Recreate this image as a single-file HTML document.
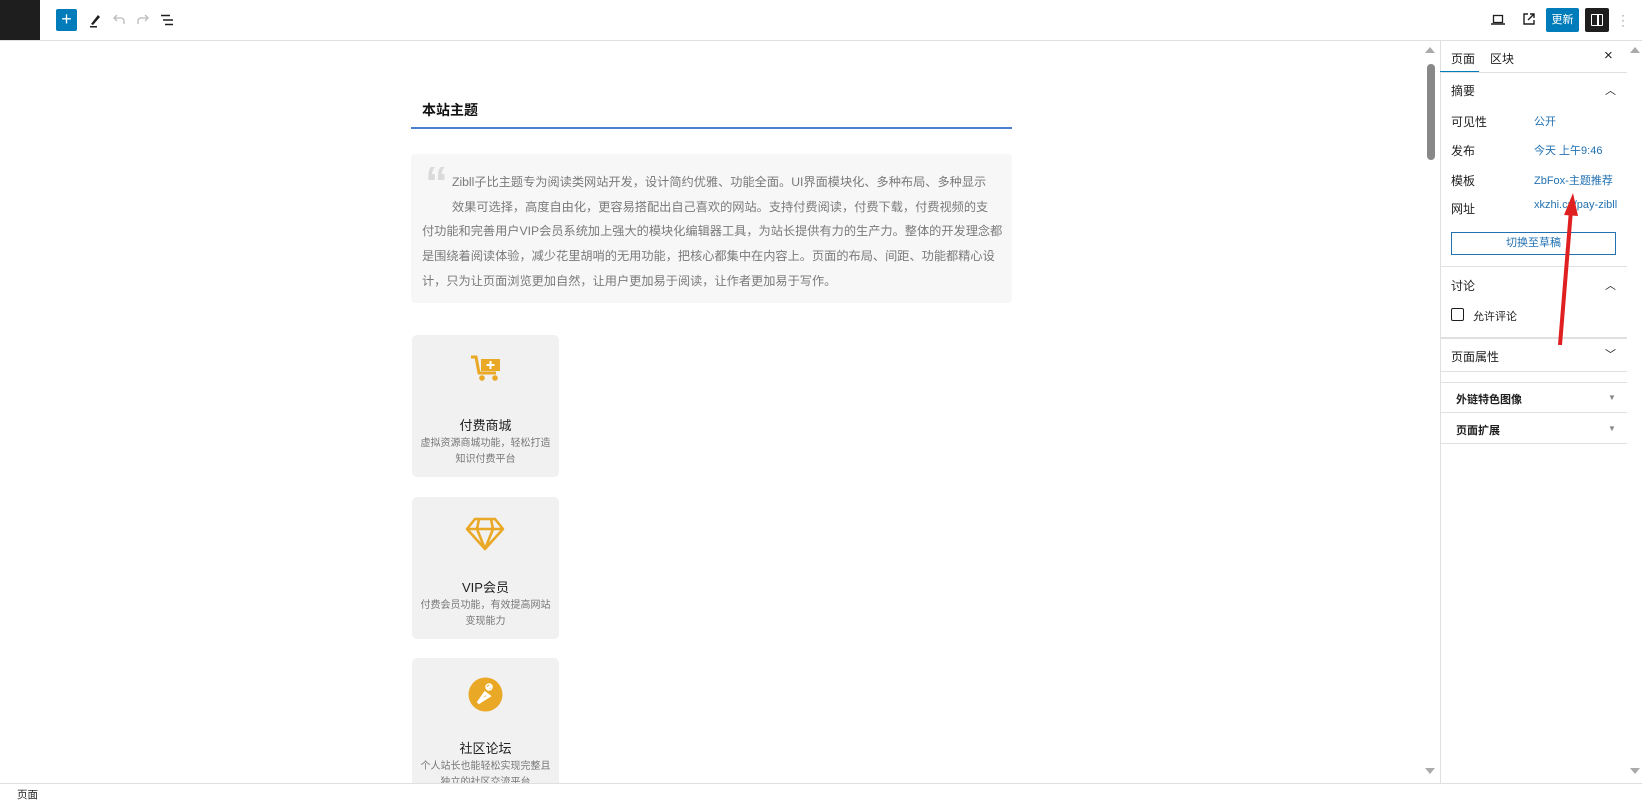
<!DOCTYPE html>
<html><head><meta charset="utf-8"><style>
*{margin:0;padding:0;box-sizing:border-box}
body{width:1642px;height:801px;overflow:hidden;background:#fff;font-family:"Liberation Sans","Noto Sans CJK SC",sans-serif;position:relative;color:#1e1e1e}
.a{position:absolute}
.t{font-size:12px}
.sb{font-size:12px;color:#1e1e1e}
.v{font-size:11px;color:#2271b1}
.card{position:absolute;left:412px;width:147px;height:142px;background:#f1f1f1;border-radius:5px;text-align:center}
.card h4{position:absolute;top:80px;width:100%;font-size:13px;font-weight:normal;color:#222}
.card p{position:absolute;top:101px;left:0;right:0;font-size:10px;color:#777;line-height:16px;white-space:nowrap}
.hr{position:absolute;left:1440px;width:187px;height:1px;background:#e0e0e0}
.q{position:absolute;font-size:12.2px;color:#7a7a7a;white-space:nowrap}
</style></head><body>
<div class="a" style="left:0;top:0;width:40px;height:40px;background:#1e1e1e"></div>
<div class="a" style="left:0;top:40px;width:1642px;height:1px;background:#e0e0e0"></div>
<div class="a" style="left:56px;top:9px;width:21px;height:22px;background:#007cba;border-radius:2px;color:#fff;font-size:18px;line-height:21px;text-align:center">+</div>
<svg class="a" style="left:88px;top:12px" width="14" height="16"><path d="M3 12 L10 3 L12 5 L5 13Z" fill="#1e1e1e"/><rect x="2" y="14" width="7" height="1.5" fill="#1e1e1e"/></svg>
<svg class="a" style="left:112px;top:14px" width="14" height="12"><path d="M12 10 V7 a3 3 0 0 0 -3 -3 H2 M5 1 L2 4 L5 7" fill="none" stroke="#bbb" stroke-width="1.3"/></svg>
<svg class="a" style="left:136px;top:14px" width="14" height="12"><path d="M2 10 V7 a3 3 0 0 1 3 -3 H12 M9 1 L12 4 L9 7" fill="none" stroke="#bbb" stroke-width="1.3"/></svg>
<svg class="a" style="left:160px;top:14px" width="14" height="12"><path d="M1 1.5H10M3 6H13M5 10.5H13" stroke="#1e1e1e" stroke-width="1.5"/></svg>
<svg class="a" style="left:1491px;top:13px" width="14" height="13"><rect x="2.5" y="2.5" width="9" height="7" fill="none" stroke="#1e1e1e" stroke-width="1.3"/><path d="M0 11H14" stroke="#1e1e1e" stroke-width="1.5"/></svg>
<svg class="a" style="left:1522px;top:12px" width="14" height="14"><path d="M6 2H2V12H12V8M8 2H12V6M12 2L6 8" fill="none" stroke="#1e1e1e" stroke-width="1.4"/></svg>
<div class="a" style="left:1546px;top:8px;width:33px;height:24px;background:#007cba;border-radius:2px;color:#fff;font-size:11px;line-height:24px;text-align:center">更新</div>
<div class="a" style="left:1585px;top:8px;width:24px;height:24px;background:#1e1e1e;border-radius:2px"></div>
<div class="a" style="left:1591px;top:14px;width:12px;height:12px;border:1.5px solid #fff;border-radius:1px"></div>
<div class="a" style="left:1597px;top:14px;width:1.5px;height:12px;background:#fff"></div>
<div class="a" style="left:1621px;top:13px;color:#888;font-size:12px;line-height:5px">·<br>·<br>·</div>

<div class="a" style="left:1425px;top:47px;width:0;height:0;border:5px solid transparent;border-bottom:6px solid #aaa;border-top:0"></div>
<div class="a" style="left:1427px;top:64px;width:8px;height:96px;background:#888;border-radius:4px"></div>
<div class="a" style="left:1425px;top:768px;width:0;height:0;border:5px solid transparent;border-top:6px solid #aaa;border-bottom:0"></div>
<div class="a" style="left:1440px;top:40px;width:1px;height:743px;background:#e0e0e0"></div>
<div class="a" style="left:1630px;top:47px;width:0;height:0;border:5px solid transparent;border-bottom:6px solid #aaa;border-top:0"></div>
<div class="a" style="left:1630px;top:768px;width:0;height:0;border:5px solid transparent;border-top:6px solid #aaa;border-bottom:0"></div>

<div class="a" style="left:422px;top:100px;font-size:14px;font-weight:bold;color:#111">本站主题</div>
<div class="a" style="left:411px;top:127px;width:601px;height:2px;background:#4a7fd0"></div>
<div class="a" style="left:411px;top:154px;width:601px;height:149px;background:#f7f7f7;border-radius:4px"></div>
<div class="a" style="left:425px;top:158px;font-size:46px;font-family:'Liberation Sans',sans-serif;font-weight:bold;color:#dadada;line-height:50px">“</div>
<div class="q" style="left:452px;top:172px">Zibll子比主题专为阅读类网站开发，设计简约优雅、功能全面。UI界面模块化、多种布局、多种显示</div>
<div class="q" style="left:452px;top:197px">效果可选择，高度自由化，更容易搭配出自己喜欢的网站。支持付费阅读，付费下载，付费视频的支</div>
<div class="q" style="left:422px;top:221px">付功能和完善用户VIP会员系统加上强大的模块化编辑器工具，为站长提供有力的生产力。整体的开发理念都</div>
<div class="q" style="left:422px;top:246px">是围绕着阅读体验，减少花里胡哨的无用功能，把核心都集中在内容上。页面的布局、间距、功能都精心设</div>
<div class="q" style="left:422px;top:271px">计，只为让页面浏览更加自然，让用户更加易于阅读，让作者更加易于写作。</div>

<div class="card" style="top:335px">
<svg class="a" style="left:58px;top:20px" width="32" height="28"><path d="M1 2H6L9 18H26" fill="none" stroke="#e9a825" stroke-width="3"/><rect x="11" y="4" width="19" height="12" fill="#e9a825"/><path d="M20.5 6V14M16.5 10H24.5" stroke="#fff" stroke-width="2"/><circle cx="12" cy="23" r="2.8" fill="#e9a825"/><circle cx="25" cy="23" r="2.8" fill="#e9a825"/></svg>
<h4>付费商城</h4><p>虚拟资源商城功能，轻松打造<br>知识付费平台</p></div>
<div class="card" style="top:497px">
<svg class="a" style="left:53px;top:20px" width="40" height="34"><path d="M10 2H30L38 12L20 32L2 12Z M2 12H38 M14 2L12 12L20 32L28 12L26 2" fill="none" stroke="#e9a825" stroke-width="2.6" stroke-linejoin="round"/></svg>
<h4>VIP会员</h4><p>付费会员功能，有效提高网站<br>变现能力</p></div>
<div class="card" style="top:658px;height:130px">
<svg class="a" style="left:56px;top:19px" width="35" height="35"><circle cx="17.5" cy="17.5" r="17" fill="#e9a825"/><path d="M10 26L17 16L21 19Z M19 12L24 8" stroke="#fff" stroke-width="3" fill="none"/><circle cx="21" cy="10" r="3" fill="none" stroke="#fff" stroke-width="1.5"/></svg>
<h4>社区论坛</h4><p>个人站长也能轻松实现完整且<br>独立的社区交流平台</p></div>

<div class="a" style="left:0;top:783px;width:1642px;height:18px;background:#fff;border-top:1px solid #e0e0e0"></div>
<div class="a" style="left:17px;top:787px;font-size:10.5px">页面</div>

<div class="a sb" style="left:1451px;top:50px">页面</div>
<div class="a sb" style="left:1490px;top:50px">区块</div>
<div class="a" style="left:1604px;top:47px;font-size:15px">×</div>
<div class="a" style="left:1440px;top:71px;width:39px;height:2px;background:#007cba"></div>
<div class="hr" style="top:72px"></div>
<div class="a sb" style="left:1451px;top:82px">摘要</div>
<div class="a" style="left:1605px;top:82px;font-size:11px">︿</div>
<div class="a t" style="left:1451px;top:113px">可见性</div><div class="a v" style="left:1534px;top:113px">公开</div>
<div class="a t" style="left:1451px;top:142px">发布</div><div class="a v" style="left:1534px;top:142px">今天 上午9:46</div>
<div class="a t" style="left:1451px;top:172px">模板</div><div class="a v" style="left:1534px;top:172px">ZbFox-主题推荐</div>
<div class="a t" style="left:1451px;top:200px">网址</div><div class="a v" style="left:1534px;top:199px">xkzhi.cn/pay-zibll</div>
<div class="a" style="left:1451px;top:232px;width:165px;height:23px;border:1px solid #2271b1;font-size:11px;color:#2271b1;text-align:center;line-height:21px">切换至草稿</div>
<div class="hr" style="top:266px"></div>
<div class="a sb" style="left:1451px;top:277px">讨论</div>
<div class="a" style="left:1605px;top:277px;font-size:11px">︿</div>
<div class="a" style="left:1451px;top:308px;width:13px;height:13px;border:1.5px solid #1e1e1e;border-radius:2px"></div>
<div class="a" style="left:1473px;top:308px;font-size:11px">允许评论</div>
<div class="hr" style="top:337px;height:2px"></div>
<div class="a sb" style="left:1451px;top:348px">页面属性</div>
<div class="a" style="left:1605px;top:346px;font-size:11px">﹀</div>
<div class="hr" style="top:371px"></div>
<div class="hr" style="top:382px"></div>
<div class="a" style="left:1456px;top:391px;font-size:11px;font-weight:bold">外链特色图像</div>
<div class="a" style="left:1608px;top:393px;font-size:8px;color:#888">▼</div>
<div class="hr" style="top:412px"></div>
<div class="a" style="left:1456px;top:422px;font-size:11px;font-weight:bold">页面扩展</div>
<div class="a" style="left:1608px;top:424px;font-size:8px;color:#888">▼</div>
<div class="hr" style="top:443px"></div>

<svg class="a" style="left:1540px;top:185px" width="50" height="170"><path d="M20 160 L31 25" stroke="#e02020" stroke-width="4"/><path d="M33 8 L24 30 L38 31Z" fill="#e02020"/></svg>
</body></html>
